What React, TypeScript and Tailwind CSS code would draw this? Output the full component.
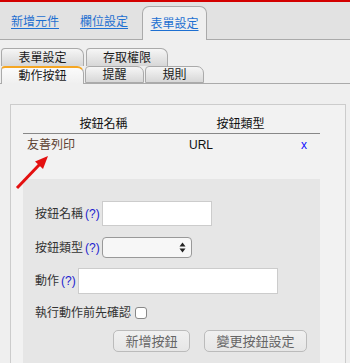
import React from 'react';

const font = 'font-["Liberation_Sans","Noto_Sans_CJK_TC",sans-serif]';

type SubTabProps = {
  label: string;
  width: string;
  active?: boolean;
  row?: 'top' | 'bottom';
};

const SubTab: React.FC<SubTabProps> = ({ label, width, active, row }) => {
  if (active) {
    return (
      <div
        className={`${width} -mb-px h-[18px] flex items-center justify-center rounded-tl-[4px] rounded-tr-[7px] border border-b-0 border-[#aaa] border-t-2 border-t-[#f5a623] bg-gradient-to-b from-[#fbfbfb] to-[#efefef] text-[12px] leading-none text-[#1a1a1a]`}
      >
        {label}
      </div>
    );
  }
  return (
    <div
      className={`${width} ${row === 'top' ? 'h-[18px] border-b-0' : 'h-[17px]'} flex items-center justify-center rounded-tl-[4px] rounded-tr-[7px] border border-[#aaa] bg-gradient-to-b from-[#f6f6f6] to-[#d7d7d7] text-[12px] leading-none text-[#1a1a1a]`}
    >
      {label}
    </div>
  );
};

const Help = () => <span className="ml-[2px] text-[#1c1ccf]">(?)</span>;

export default function App() {
  return (
    <div className={`relative w-[350px] h-[363px] overflow-hidden bg-[#efefef] ${font}`}>
      <div className="h-[2px] bg-[#d30000]" />

      {/* main tabs */}
      <div className="flex items-end h-[38px] bg-[#e2e2e2] border-b border-[#aaa]">
        <a className="ml-[11px] h-[34px] flex items-center text-[12px] leading-none text-[#1d6fd1] underline underline-offset-2">
          新增元件
        </a>
        <a className="ml-[21px] h-[34px] flex items-center text-[12px] leading-none text-[#1d6fd1] underline underline-offset-2">
          欄位設定
        </a>
        <div className="ml-[14px] -mb-px w-[65px] h-[34px] flex items-center justify-center rounded-t-[7px] border border-b-0 border-[#aaa] bg-[#efefef]">
          <span className="text-[12px] leading-none text-[#1d6fd1] underline underline-offset-2">
            表單設定
          </span>
        </div>
      </div>

      {/* sub tabs */}
      <div className="pt-[8px]">
        <div className="flex pl-[1px] gap-[2px]">
          <SubTab label="表單設定" width="w-[83px]" row="top" />
          <SubTab label="存取權限" width="w-[82px]" row="top" />
        </div>
        <div className="flex pl-[1px] gap-[1px] border-b border-[#aaa]">
          <SubTab label="動作按鈕" width="w-[83px]" active />
          <SubTab label="提醒" width="w-[59px]" />
          <SubTab label="規則" width="w-[59px]" />
        </div>
      </div>

      {/* panel */}
      <div className="ml-[10px] mt-[20px] w-[336px] h-[300px] border border-[#ccc] bg-[#f2f2f2] pl-[12px] pr-[25px] pt-[9px]">
        <div className="grid grid-cols-[161px_113px_23px] border-b border-[#888] h-[20px] text-[12px] leading-none text-[#111]">
          <div className="flex items-center justify-center">按鈕名稱</div>
          <div className="flex items-center justify-center">按鈕類型</div>
          <div />
        </div>
        <div className="grid grid-cols-[161px_113px_23px] h-[22px] text-[12px] leading-none">
          <div className="flex items-center pl-[4px] text-[#5b4030]">友善列印</div>
          <div className="flex items-center pl-[5px] text-[#111]">URL</div>
          <div className="flex items-center pl-[4px] text-[#1010ff]">x</div>
        </div>

        {/* form */}
        <div className="mt-[23px] bg-[#e6e6e6] h-[200px] pl-[12px] pt-[22px] text-[12px] leading-none text-[#333]">
          <div className="flex items-center h-[25px]">
            <span>按鈕名稱</span>
            <Help />
            <div className="ml-[2px] w-[110px] h-[25px] bg-white border border-[#ccc]" />
          </div>
          <div className="flex items-center h-[21px] mt-[11px]">
            <span>按鈕類型</span>
            <Help />
            <div className="ml-[2px] w-[90px] h-[21px] bg-[#f7f7f7] border border-[#999] rounded-[4px] flex items-center justify-end pr-[5px]">
              <svg width="7" height="11" viewBox="0 0 7 11">
                <path d="M3.5 0.5 L6.5 4.5 H0.5 Z" fill="#222" />
                <path d="M3.5 10.5 L6.5 6.5 H0.5 Z" fill="#222" />
              </svg>
            </div>
          </div>
          <div className="flex items-center h-[26px] mt-[10px]">
            <span>動作</span>
            <Help />
            <div className="ml-[2px] w-[200px] h-[26px] bg-white border border-[#ccc]" />
          </div>
          <div className="flex items-center h-[16px] mt-[11px]">
            <span>執行動作前先確認</span>
            <div className="ml-[4px] w-[12px] h-[12px] bg-white border border-[#888] rounded-[3px]" />
          </div>
          <div className="flex h-[22px] mt-[9px] ml-[78px] gap-[14px]">
            <button className="w-[77px] h-[22px] rounded-[5px] border border-[#bbb] bg-gradient-to-b from-[#f0f0f0] to-[#e6e6e6] text-[13px] leading-none text-[#666]">
              新增按鈕
            </button>
            <button className="w-[103px] h-[22px] rounded-[5px] border border-[#bbb] bg-gradient-to-b from-[#f0f0f0] to-[#e6e6e6] text-[13px] leading-none text-[#666]">
              變更按鈕設定
            </button>
          </div>
        </div>
      </div>

      {/* red arrow annotation */}
      <svg className="absolute left-0 top-0 pointer-events-none" width="350" height="363">
        <line x1="17" y1="188" x2="40" y2="164" stroke="#e41010" strokeWidth="3" />
        <polygon points="48,156 35,161.5 43,169.1" fill="#e41010" />
      </svg>
    </div>
  );
}
